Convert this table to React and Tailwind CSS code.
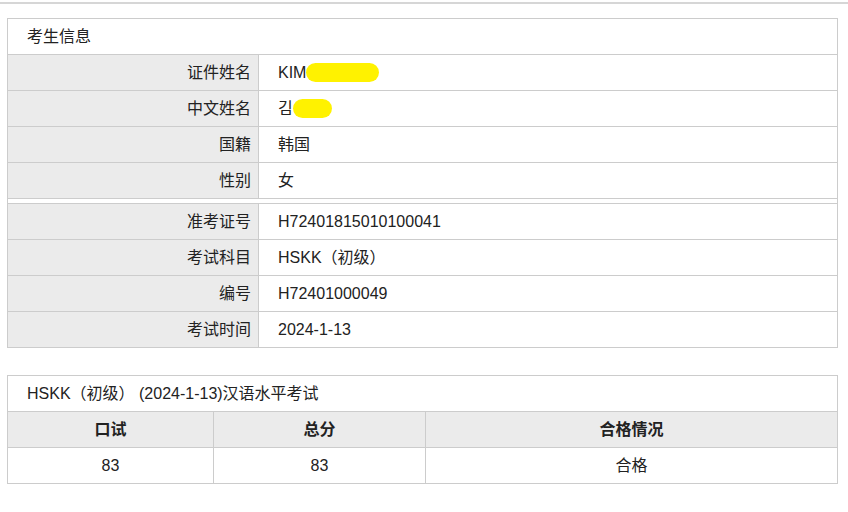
import React from 'react';

const font = { fontFamily: '"Liberation Sans", Arial, "Noto Sans CJK SC", sans-serif' };

const infoTop = [
  { label: '证件姓名', value: 'KIM', blot: 'w-[73px]' },
  { label: '中文姓名', value: '김', blot: 'w-[39px]' },
  { label: '国籍', value: '韩国' },
  { label: '性别', value: '女' },
];

const infoBottom = [
  { label: '准考证号', value: 'H72401815010100041' },
  { label: '考试科目', value: 'HSKK（初级）' },
  { label: '编号', value: 'H72401000049' },
  { label: '考试时间', value: '2024-1-13' },
];

const InfoRow = ({ row }) => (
  <div className="flex h-[36px] border-b border-[#cccccc]">
    <div className="w-[251px] shrink-0 bg-[#ebebeb] border-r border-[#cccccc] flex items-center justify-end pr-[7px]">
      {row.label}
    </div>
    <div className="flex-1 flex items-center pl-[19px]">
      <span>{row.value}</span>
      {row.blot && (
        <span className={`inline-block h-[19px] ${row.blot} rounded-full bg-[#fff200]`} />
      )}
    </div>
  </div>
);

export default function App() {
  return (
    <div className="w-[848px] h-[512px] bg-white text-[16px] text-[#222222]" style={font}>
      <div className="h-[2px]" />
      <div className="h-[2px] bg-[#d6d6d6]" />

      {/* 考生信息 */}
      <div className="ml-[7px] mt-[14px] w-[831px] border-l border-r border-t border-[#cccccc]">
        <div className="h-[36px] border-b border-[#cccccc] flex items-center pl-[19px]">
          考生信息
        </div>
        {infoTop.map((row) => (
          <InfoRow key={row.label} row={row} />
        ))}
        <div className="h-[5px] border-b border-[#cccccc]" />
        {infoBottom.map((row) => (
          <InfoRow key={row.label} row={row} />
        ))}
      </div>

      {/* 成绩 */}
      <div className="ml-[7px] mt-[27px] w-[831px] border-l border-r border-t border-[#cccccc]">
        <div className="h-[36px] border-b border-[#cccccc] flex items-center pl-[19px]">
          HSKK（初级） (2024-1-13)汉语水平考试
        </div>
        <div className="flex h-[36px] border-b border-[#cccccc] bg-[#ebebeb] font-bold">
          <div className="w-[206px] border-r border-[#cccccc] flex items-center justify-center">口试</div>
          <div className="w-[212px] border-r border-[#cccccc] flex items-center justify-center">总分</div>
          <div className="flex-1 flex items-center justify-center">合格情况</div>
        </div>
        <div className="flex h-[36px] border-b border-[#cccccc]">
          <div className="w-[206px] border-r border-[#cccccc] flex items-center justify-center">83</div>
          <div className="w-[212px] border-r border-[#cccccc] flex items-center justify-center">83</div>
          <div className="flex-1 flex items-center justify-center">合格</div>
        </div>
      </div>
    </div>
  );
}
